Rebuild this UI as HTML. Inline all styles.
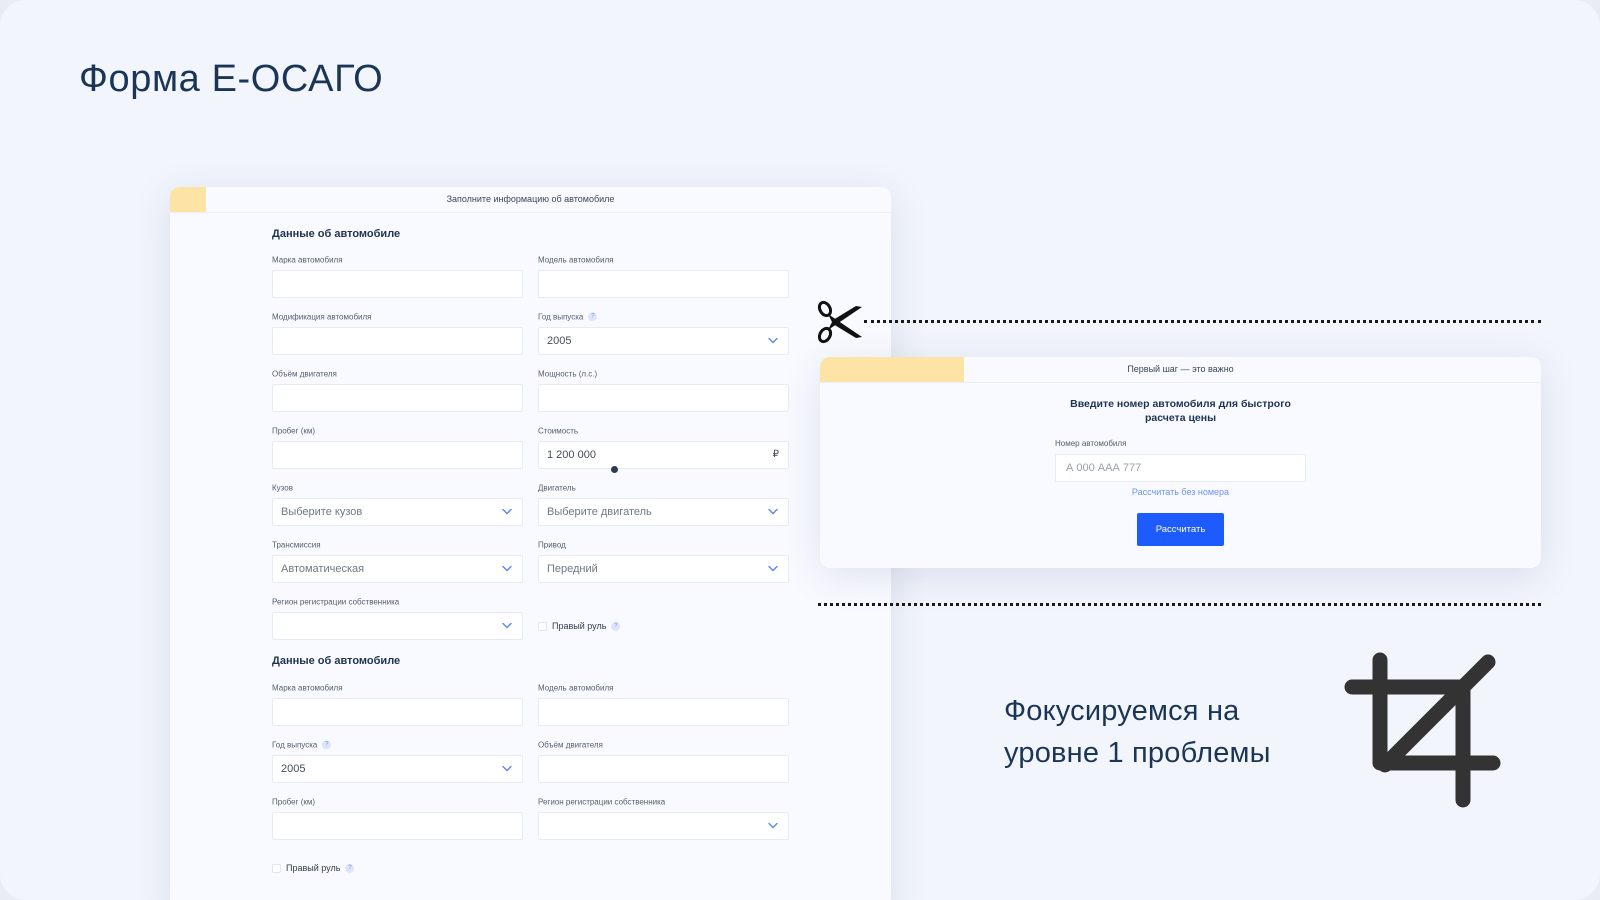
<!DOCTYPE html>
<html><head><meta charset="utf-8"><style>
*{margin:0;padding:0;box-sizing:border-box}
body{width:1600px;height:900px;background:#e9ecf4;font-family:"Liberation Sans",sans-serif;overflow:hidden;position:relative}
.slide{position:absolute;left:0;top:0;width:1600px;height:900px;background:#f2f5fc;border-radius:26px;overflow:hidden}
.a{position:absolute}
.card{background:#f8faff;border-radius:10px;box-shadow:0 8px 40px rgba(40,60,110,.12)}
.lb{position:absolute;font-size:8px;color:#55606e;white-space:nowrap;transform:translateY(-50%)}
.in{position:absolute;width:251px;height:28px;background:#fff;border:1px solid #e6ebf6;border-radius:2px;font-size:11px;color:#444c58;padding-left:8px;line-height:26px}
.in.ph{color:#707884}
.ch{position:absolute;right:10px;top:9px;width:10px;height:7px}
.q{display:inline-block;width:9px;height:9px;border-radius:50%;background:#dde5fb;color:#7590d8;font-size:6px;line-height:9px;text-align:center;margin-left:5px;vertical-align:middle}
.h{position:absolute;font-size:11px;font-weight:bold;color:#1f3350;transform:translateY(-50%)}
.cb{position:absolute;font-size:9px;color:#333c48;transform:translateY(-50%);white-space:nowrap}
.cb i{display:inline-block;width:9px;height:9px;border:1px solid #e0e5f0;background:#fff;border-radius:2px;vertical-align:middle;margin-right:5px}
</style></head><body>
<div class="slide">
<div class="a" style="left:79px;top:58px;font-size:38px;color:#1b3557;letter-spacing:.6px">Форма Е-ОСАГО</div>

<div class="a card" style="left:170px;top:187px;width:721px;height:740px;">
 <div class="a" style="left:0;top:0;width:36px;height:25px;background:#fde3a6;border-top-left-radius:10px"></div>
 <div class="a" style="left:0;top:25px;width:721px;height:1px;background:#eceff6"></div>
 <div class="a" style="left:0;top:7px;width:721px;text-align:center;font-size:9px;color:#3d4757">Заполните информацию об автомобиле</div>
</div>
<svg width="0" height="0" style="position:absolute"><defs><symbol id="chev" viewBox="0 0 10 7"><path d="M1 1.5l4 4 4-4" fill="none" stroke="#5b86f0" stroke-width="1.4" stroke-linecap="round"/></symbol></defs></svg>

<div class="h" style="left:272px;top:234px">Данные об автомобиле</div>
<div class="lb" style="left:272px;top:260px">Марка автомобиля</div>
<div class="in" style="left:272px;top:270px"></div>
<div class="lb" style="left:538px;top:260px">Модель автомобиля</div>
<div class="in" style="left:538px;top:270px"></div>

<div class="lb" style="left:272px;top:317px">Модификация автомобиля</div>
<div class="in" style="left:272px;top:327px"></div>
<div class="lb" style="left:538px;top:317px">Год выпуска<span class="q">?</span></div>
<div class="in" style="left:538px;top:327px">2005<svg class="ch"><use href="#chev"/></svg></div>

<div class="lb" style="left:272px;top:374px">Объём двигателя</div>
<div class="in" style="left:272px;top:384px"></div>
<div class="lb" style="left:538px;top:374px">Мощность (л.с.)</div>
<div class="in" style="left:538px;top:384px"></div>

<div class="lb" style="left:272px;top:431px">Пробег (км)</div>
<div class="in" style="left:272px;top:441px"></div>
<div class="lb" style="left:538px;top:431px">Стоимость</div>
<div class="in" style="left:538px;top:441px">1 200 000<span style="position:absolute;right:9px;font-size:10px">₽</span></div>
<div class="a" style="left:611px;top:466px;width:7px;height:7px;border-radius:50%;background:#2d3b52"></div>

<div class="lb" style="left:272px;top:488px">Кузов</div>
<div class="in ph" style="left:272px;top:498px">Выберите кузов<svg class="ch"><use href="#chev"/></svg></div>
<div class="lb" style="left:538px;top:488px">Двигатель</div>
<div class="in ph" style="left:538px;top:498px">Выберите двигатель<svg class="ch"><use href="#chev"/></svg></div>

<div class="lb" style="left:272px;top:545px">Трансмиссия</div>
<div class="in ph" style="left:272px;top:555px">Автоматическая<svg class="ch"><use href="#chev"/></svg></div>
<div class="lb" style="left:538px;top:545px">Привод</div>
<div class="in ph" style="left:538px;top:555px">Передний<svg class="ch"><use href="#chev"/></svg></div>

<div class="lb" style="left:272px;top:602px">Регион регистрации собственника</div>
<div class="in" style="left:272px;top:612px"><svg class="ch"><use href="#chev"/></svg></div>
<div class="cb" style="left:538px;top:626px"><i></i>Правый руль<span class="q">?</span></div>

<div class="h" style="left:272px;top:661px">Данные об автомобиле</div>
<div class="lb" style="left:272px;top:688px">Марка автомобиля</div>
<div class="in" style="left:272px;top:698px"></div>
<div class="lb" style="left:538px;top:688px">Модель автомобиля</div>
<div class="in" style="left:538px;top:698px"></div>

<div class="lb" style="left:272px;top:745px">Год выпуска<span class="q">?</span></div>
<div class="in" style="left:272px;top:755px">2005<svg class="ch"><use href="#chev"/></svg></div>
<div class="lb" style="left:538px;top:745px">Объём двигателя</div>
<div class="in" style="left:538px;top:755px"></div>

<div class="lb" style="left:272px;top:802px">Пробег (км)</div>
<div class="in" style="left:272px;top:812px"></div>
<div class="lb" style="left:538px;top:802px">Регион регистрации собственника</div>
<div class="in" style="left:538px;top:812px"><svg class="ch"><use href="#chev"/></svg></div>
<div class="cb" style="left:272px;top:868px"><i></i>Правый руль<span class="q">?</span></div>

<div class="a" style="left:864px;top:320px;width:677px;border-top:3px dotted #1a1a1a"></div>
<div class="a" style="left:818px;top:603px;width:723px;border-top:3px dotted #1a1a1a"></div>
<svg class="a" style="left:816px;top:300px" width="48" height="44" viewBox="0 0 48 44">
 <ellipse cx="9" cy="9" rx="5" ry="7" transform="rotate(-30 9 9)" fill="none" stroke="#111" stroke-width="3"/>
 <ellipse cx="9" cy="35" rx="5" ry="7" transform="rotate(30 9 35)" fill="none" stroke="#111" stroke-width="3"/>
 <path d="M12 14L46 37L40 38L17 24Z" fill="#111"/>
 <path d="M12 30L46 7L40 6L17 20Z" fill="#111"/>
</svg>

<div class="a card" style="left:820px;top:357px;width:721px;height:211px;">
 <div class="a" style="left:0;top:0;width:144px;height:25px;background:#fde3a6;border-top-left-radius:10px"></div>
 <div class="a" style="left:0;top:25px;width:721px;height:1px;background:#eceff6"></div>
 <div class="a" style="left:0;top:7px;width:721px;text-align:center;font-size:9px;color:#3d4757">Первый шаг — это важно</div>
 <div class="a" style="left:0;top:40px;width:721px;text-align:center;font-size:10.5px;font-weight:bold;color:#1f3350;line-height:14px">Введите номер автомобиля для быстрого<br>расчета цены</div>
 <div class="a" style="left:235px;top:82px;font-size:8px;color:#55606e">Номер автомобиля</div>
 <div class="in" style="left:235px;top:97px;width:251px;color:#9aa0aa;padding-left:10px">А 000 ААА 777</div>
 <div class="a" style="left:0;top:130px;width:721px;text-align:center;font-size:9px;color:#6c93f0">Рассчитать без номера</div>
 <div class="a" style="left:317px;top:156px;width:87px;height:33px;background:#1e5bff;border-radius:2px;color:#fff;font-size:9.5px;text-align:center;line-height:33px">Рассчитать</div>
</div>

<div class="a" style="left:1004px;top:690px;font-size:29px;color:#1b3557;line-height:42px;letter-spacing:.2px">Фокусируемся на<br>уровне 1 проблемы</div>

<svg class="a" style="left:1330px;top:645px" width="180" height="170" viewBox="1330 645 180 170">
 <g fill="none" stroke="#333" stroke-width="15" stroke-linecap="round" stroke-linejoin="round">
  <path d="M1380 660V763H1493"/>
  <path d="M1352 687H1463V800"/>
  <path d="M1488 662L1385 765"/>
 </g>
</svg>
</div>
</body></html>
